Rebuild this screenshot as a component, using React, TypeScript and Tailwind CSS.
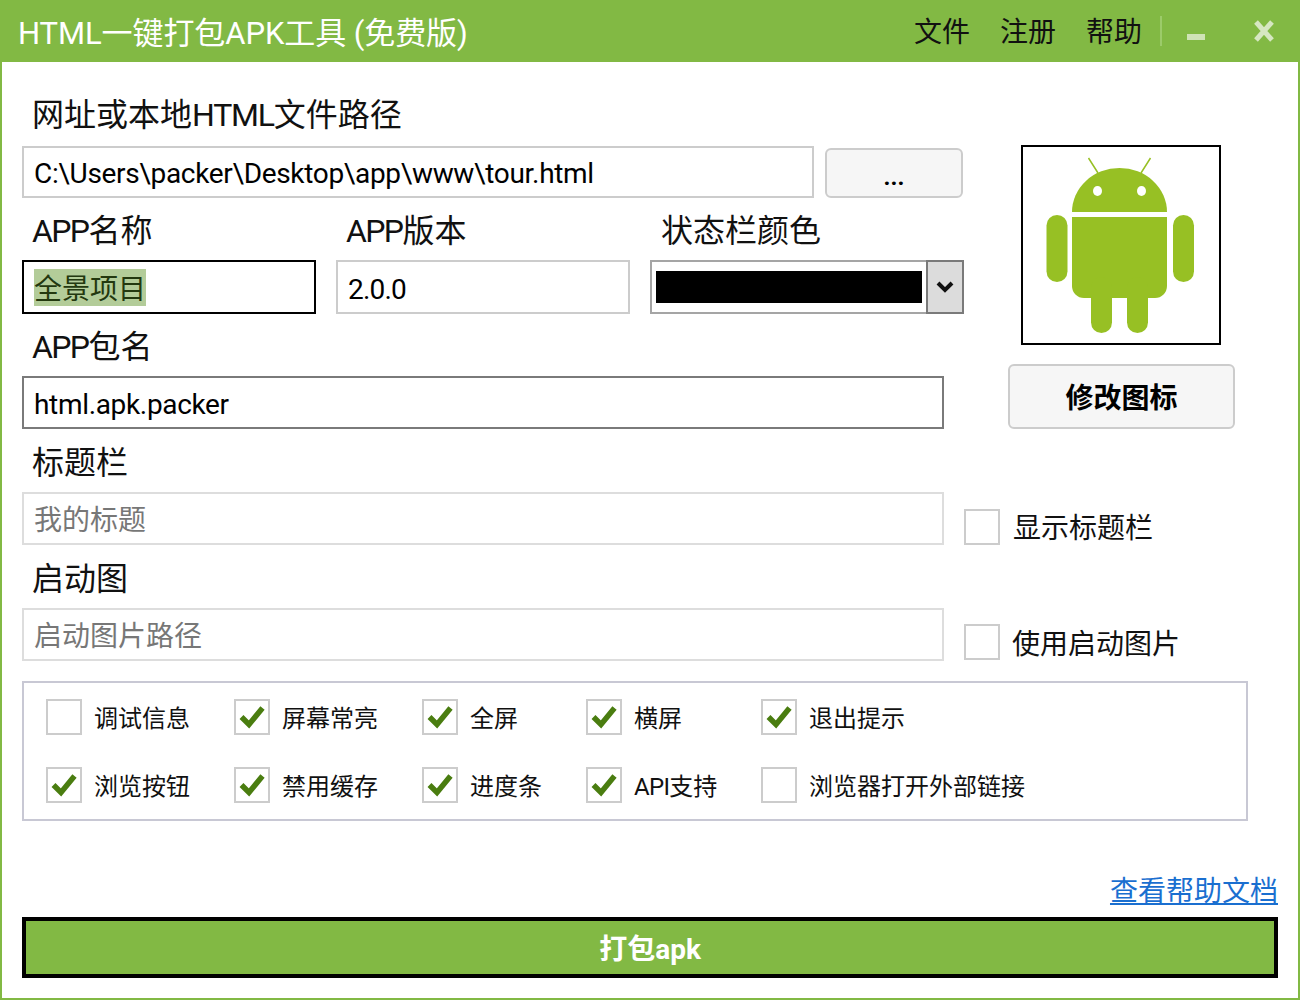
import clsx from "clsx";
import { twMerge } from "tailwind-merge";
import type { ReactNode } from "react";

const GREEN = "bg-[#82b944]";

const AndroidLogo = () => (
  <svg width="196" height="196" viewBox="0 0 196 196" className="block">
    <g fill="#97c024">
      <path d="M49 65a47.500 44 0 0 1 95 0z" />
      <path d="M49 70h95v69a12 12 0 0 1-12 12H61a12 12 0 0 1-12-12z" />
      <rect x="23.500" y="68" width="21" height="67" rx="10.500" />
      <rect x="150" y="68" width="21" height="67" rx="10.500" />
      <rect x="68" y="130" width="21" height="56" rx="10.500" />
      <rect x="104" y="130" width="21" height="56" rx="10.500" />
    </g>
    <path d="M65.500 11 75 26M127.500 11 118 26" stroke="#97c024" strokeWidth="1.500" fill="none" />
    <ellipse cx="74.500" cy="44" rx="4.500" ry="5" fill="#fff" />
    <ellipse cx="118.500" cy="44" rx="4.500" ry="5" fill="#fff" />
  </svg>
);

const CheckBox = ({ checked, className }: { checked?: boolean; className?: string }) => (
  <div className={clsx("flex size-9 shrink-0 items-center justify-center border-2 border-[#cccccc] bg-white", className)}>
    {checked && (
      <svg width="26" height="24" viewBox="0 0 26 24">
        <path d="M2.500 12 10 19.500 23.500 3" stroke="#4a7d10" strokeWidth="5.500" fill="none" />
      </svg>
    )}
  </div>
);

const Label = ({ children, className }: { children: ReactNode; className?: string }) => (
  <div className={twMerge("flex items-center pl-[10px] pt-[3px] text-[32px] leading-none text-[#111]", className)}>{children}</div>
);

const Field = ({ children, className }: { children: ReactNode; className?: string }) => (
  <div className={twMerge("flex items-center border-2 border-[#cccccc] pl-[10px] pt-[4px] text-[28px] text-black", className)}>
    {children}
  </div>
);

const options: { text: ReactNode; checked: boolean; width: string }[][] = [
  [
    { text: "调试信息", checked: false, width: "w-[188px]" },
    { text: "屏幕常亮", checked: true, width: "w-[188px]" },
    { text: "全屏", checked: true, width: "w-[164px]" },
    { text: "横屏", checked: true, width: "w-[175px]" },
    { text: "退出提示", checked: true, width: "w-[300px]" },
  ],
  [
    { text: "浏览按钮", checked: true, width: "w-[188px]" },
    { text: "禁用缓存", checked: true, width: "w-[188px]" },
    { text: "进度条", checked: true, width: "w-[164px]" },
    { text: <><span className="tracking-[-0.7px]">API</span>支持</>, checked: true, width: "w-[175px]" },
    { text: "浏览器打开外部链接", checked: false, width: "w-[300px]" },
  ],
];

export default function App() {
  return (
    <div className="flex h-[1000px] w-[1300px] flex-col border-x-2 border-b-2 border-[#82b944] bg-white font-['Roboto','Noto_Sans_CJK_SC',sans-serif]">
      <header className={clsx("-mx-[2px] flex h-[62px] shrink-0 items-center justify-between pl-[18px]", GREEN)}>
        <div className="pt-[5px] text-[31px] leading-none tracking-[-0.08px] text-white">HTML一键打包APK工具 (免费版)</div>
        <div className="flex items-center">
          <div className="flex gap-[30px] pt-[4px] text-[28px] text-[#111]">
            <span>文件</span>
            <span>注册</span>
            <span>帮助</span>
          </div>
          <div className="ml-[18px] h-[30px] w-[2px] bg-[#9ccb6a]" />
          <div className="ml-[25px] mt-[12px] h-[6px] w-[18px] bg-[#cfe3b6]" />
          <svg width="24" height="24" viewBox="0 0 24 24" className="ml-[47px] mr-[24px]">
            <path d="M4 3 20 21M20 3 4 21" stroke="#d6e7c2" strokeWidth="5" fill="none" />
          </svg>
        </div>
      </header>

      <main className="flex flex-1 flex-col px-5 pt-[22px]">
        <div className="flex">
          <div className="w-[942px] shrink-0">
            <Label className="h-[62px] pt-0">
              网址或本地<span className="tracking-[-1.2px]">HTML</span>文件路径
            </Label>
            <div className="flex gap-[11px]">
              <Field className="h-[52px] w-[792px] tracking-[-0.32px]">C:\Users\packer\Desktop\app\www\tour.html</Field>
              <button className="mt-[2px] h-[50px] w-[138px] rounded-[6px] border-2 border-[#cccccc] bg-[#f6f6f6] pt-[7px] text-[24px] font-bold leading-none text-black">
                ...
              </button>
            </div>
            <div className="flex">
              <div className="w-[314px]">
                <Label className="h-[62px]">
                  <span className="tracking-[-1.6px]">APP</span>名称
                </Label>
                <Field className="h-[54px] w-[294px] border-black pt-0">
                  <span className="flex h-[37px] items-center bg-[#b3cc99] pt-[6px] text-[#23380f]">全景项目</span>
                </Field>
              </div>
              <div className="w-[314px]">
                <Label className="h-[62px]">
                  <span className="tracking-[-1.6px]">APP</span>版本
                </Label>
                <Field className="h-[54px] w-[294px] pt-[6px] tracking-[-0.8px]">2.0.0</Field>
              </div>
              <div className="w-[314px]">
                <Label className="h-[62px] pl-[11px]">状态栏颜色</Label>
                <div className="flex h-[54px] border-2 border-[#a5a5a5]">
                  <div className="flex flex-1 items-center pl-[4px] pr-[6px]">
                    <div className="h-[32px] w-full bg-black" />
                  </div>
                  <div className="-m-[2px] flex w-[38px] items-center justify-center border-2 border-[#7a7a7a] bg-[#dcdcdc]">
                    <svg width="18" height="12" viewBox="0 0 18 12">
                      <path d="M2 2 9 9 16 2" stroke="#111" strokeWidth="4" fill="none" />
                    </svg>
                  </div>
                </div>
              </div>
            </div>
            <Label className="h-[62px]">
              <span className="tracking-[-1.6px]">APP</span>包名
            </Label>
            <Field className="h-[53px] w-[922px] border-[#7a7a7a] tracking-[-0.33px]">html.apk.packer</Field>
          </div>
          <div className="pt-[61px]">
            <div className="ml-[57px] size-[200px] border-2 border-black">
              <AndroidLogo />
            </div>
            <button className="ml-[44px] mt-[19px] h-[65px] w-[227px] rounded-[6px] border-2 border-[#cccccc] bg-[#f6f6f6] pt-[4px] text-[28px] font-bold text-black">
              修改图标
            </button>
          </div>
        </div>

        <Label className="h-[63px] pt-[4px]">标题栏</Label>
        <div className="flex items-end">
          <Field className="h-[53px] w-[922px] border-[#dddddd] text-[#777]">我的标题</Field>
          <CheckBox className="ml-5" />
          <span className="-mb-[2px] ml-[13px] text-[28px] leading-[36px] text-[#111]">显示标题栏</span>
        </div>
        <Label className="h-[63px] pt-[4px]">启动图</Label>
        <div className="flex items-end">
          <Field className="h-[53px] w-[922px] border-[#dddddd] text-[#777]">启动图片路径</Field>
          <CheckBox className="mb-[1px] ml-5" />
          <span className="-mb-[2px] ml-[12px] text-[28px] leading-[36px] text-[#111]">使用启动图片</span>
        </div>

        <div className="mt-5 flex h-[140px] w-[1226px] flex-col gap-8 border-2 border-[#c8c8d4] pl-[22px] pt-4">
          {options.map((row, i) => (
            <div key={i} className="flex">
              {row.map((item, j) => (
                <div key={j} className={clsx("flex items-center", item.width)}>
                  <CheckBox checked={item.checked} />
                  <span className="ml-[12px] pt-[4px] text-[24px] leading-none text-[#111]">{item.text}</span>
                </div>
              ))}
            </div>
          ))}
        </div>

        <div className="mt-[51px] flex justify-end">
          <a className="text-[28px] leading-[40px] text-[#1a6fd0] underline">查看帮助文档</a>
        </div>
        <button className={clsx("mt-[5px] h-[61px] w-[1256px] border-4 border-black pt-[4px] text-[28px] font-bold text-white", GREEN)}>
          打包apk
        </button>
      </main>
    </div>
  );
}
